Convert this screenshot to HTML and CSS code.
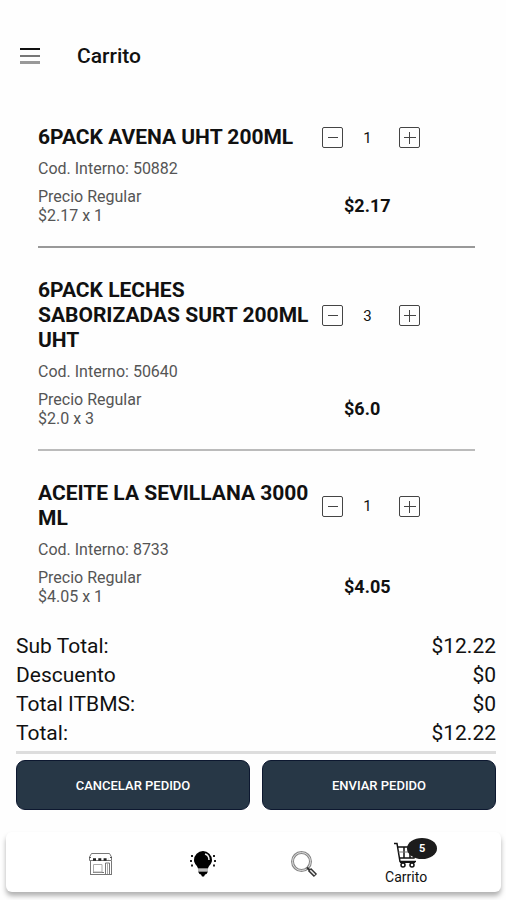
FILE: index.html
```html
<!DOCTYPE html>
<html lang="es">
<head>
<meta charset="utf-8">
<meta name="viewport" content="width=device-width, initial-scale=1">
<title>Carrito</title>
<link rel="stylesheet" href="styles.css">
</head>
<body>
<div class="app">
  <header class="topbar">
    <button class="menu" type="button" aria-label="Menú">
      <svg width="22" height="18" viewBox="0 0 22 18"><path d="M1 2h20" stroke="#111" stroke-width="2"/><path d="M1 9h20" stroke="#777" stroke-width="2"/><path d="M1 15.500h20" stroke="#999" stroke-width="3"/></svg>
    </button>
    <h1 class="title">Carrito</h1>
  </header>

  <main class="items">
    <article class="item">
      <h2 class="name">6PACK AVENA UHT 200ML</h2>
      <div class="stepper">
        <button class="step" type="button" aria-label="Quitar"><svg viewBox="0 0 20 20"><path d="M5 9.500h10"/></svg></button>
        <span class="qty">1</span>
        <button class="step" type="button" aria-label="Agregar"><svg viewBox="0 0 20 20"><path d="M4 9.500h12M9.500 4v12"/></svg></button>
      </div>
      <p class="code">Cod. Interno: 50882</p>
      <p class="unit">Precio Regular<br>$2.17 x 1</p>
      <p class="price">$2.17</p>
    </article>
    <article class="item item-soft">
      <h2 class="name">6PACK LECHES SABORIZADAS SURT 200ML UHT</h2>
      <div class="stepper">
        <button class="step" type="button" aria-label="Quitar"><svg viewBox="0 0 20 20"><path d="M5 9.500h10"/></svg></button>
        <span class="qty">3</span>
        <button class="step" type="button" aria-label="Agregar"><svg viewBox="0 0 20 20"><path d="M4 9.500h12M9.500 4v12"/></svg></button>
      </div>
      <p class="code">Cod. Interno: 50640</p>
      <p class="unit">Precio Regular<br>$2.0 x 3</p>
      <p class="price">$6.0</p>
    </article>
    <article class="item">
      <h2 class="name">ACEITE LA SEVILLANA 3000 ML</h2>
      <div class="stepper">
        <button class="step" type="button" aria-label="Quitar"><svg viewBox="0 0 20 20"><path d="M5 9.500h10"/></svg></button>
        <span class="qty">1</span>
        <button class="step" type="button" aria-label="Agregar"><svg viewBox="0 0 20 20"><path d="M4 9.500h12M9.500 4v12"/></svg></button>
      </div>
      <p class="code">Cod. Interno: 8733</p>
      <p class="unit">Precio Regular<br>$4.05 x 1</p>
      <p class="price">$4.05</p>
    </article>
  </main>

  <section class="summary">
    <dl class="totals">
      <div class="row"><dt>Sub Total:</dt><dd>$12.22</dd></div>
      <div class="row"><dt>Descuento</dt><dd>$0</dd></div>
      <div class="row"><dt>Total ITBMS:</dt><dd>$0</dd></div>
      <div class="row"><dt>Total:</dt><dd>$12.22</dd></div>
    </dl>
    <div class="actions">
      <button class="action" type="button">CANCELAR PEDIDO</button>
      <button class="action" type="button">ENVIAR PEDIDO</button>
    </div>
  </section>

  <nav class="tabs">
    <a class="tab" href="#tienda" aria-label="Tienda">
      <svg width="28" height="24" viewBox="0 0 28 24" fill="none" stroke="#777" stroke-width="1">
        <path d="M4.500 1.500h18l2 3.500v3.500h-22V5z"/>
        <path d="M2 5.500h2M23 5.500h2" stroke="#555"/>
        <path d="M6 7.500h16" stroke="#222" stroke-width="2.500" stroke-dasharray="3 2.300"/>
        <path d="M3.500 9v13.500h21V9"/>
        <path d="M3 22.500h22M6 20.500h11"/>
        <path d="M6.500 12.500h8.500v7.500h-8.500z" stroke="#aaa"/>
        <path d="M18.500 22V11h4v11" stroke="#777"/>
        <path d="M20.500 11v11" stroke="#aaa"/>
      </svg>
    </a>
    <a class="tab" href="#ideas" aria-label="Ideas">
      <svg width="28" height="28" viewBox="0 0 28 28">
        <path d="M14 1a9 9 0 0 0-9 9c0 4 3.500 5.500 4 8.500h10c.5-3 4-4.500 4-8.500a9 9 0 0 0-9-9zM9 21.500h10l-1.500 2.500-1.500.5-1 2h-2l-1-2-1.500-.5z"/>
        <path d="M9 20h10" stroke="#777" stroke-width="1"/>
        <path d="M16 4q4 1 4 6" fill="none" stroke="#eee" stroke-width="1.500"/>
        <path d="M2 6h2M1 11h2M2 15.500h2M24 6h2M25 11h2M24 15.500h2" stroke="#222" stroke-width="2"/>
      </svg>
    </a>
    <a class="tab" href="#buscar" aria-label="Buscar">
      <svg width="28" height="28" viewBox="0 0 28 28" fill="none">
        <circle cx="11.500" cy="11.500" r="9" stroke="#888" stroke-width="3"/>
        <circle cx="11.500" cy="11.500" r="9" stroke="#ddd" stroke-width="1"/>
        <path d="M17 17.500l3 3" stroke="#333" stroke-width="2"/>
        <path d="M19.500 19.500l6 6" stroke="#333" stroke-width="4.500"/>
        <path d="M20.300 20.300l4.500 4.500" stroke="#eee" stroke-width="1.500"/>
      </svg>
    </a>
    <a class="tab" href="#carrito">
      <span class="cart">
        <svg width="26" height="26" viewBox="0 0 26 26" fill="none" stroke="#111" stroke-width="1.500">
          <path d="M1 1.500h3l3 18h16M4.500 5H23l-2 11H6.500M11 5v11M17 5v11"/>
          <path d="M5.500 10h17" stroke="#777" stroke-width="1"/>
          <path d="M7 20h15" stroke-width="2"/>
          <circle cx="10" cy="23" r="2"/><circle cx="19" cy="23" r="2"/>
        </svg>
        <span class="badge">5</span>
      </span>
      <span class="tab-label">Carrito</span>
    </a>
  </nav>
</div>
</body>
</html>
```
FILE: styles.css
```css
* { box-sizing: border-box; margin: 0; }

body {
  background: #fefefe;
  color: #111;
  font-family: Roboto, "Liberation Sans", sans-serif;
}

button {
  padding: 0;
  border: 0;
  background: none;
  font: inherit;
  cursor: pointer;
}

svg { display: block; }

.app {
  display: flex;
  flex-direction: column;
  min-height: 100vh;
}

.topbar {
  display: flex;
  align-items: center;
  gap: 36px;
  padding: 40px 19px 0;
  height: 72px;
}

.title {
  font-size: 21px;
  font-weight: 500;
  line-height: 32px;
}

.items {
  display: flex;
  flex-direction: column;
  gap: 30px;
  padding: 53px 31px 26px 38px;
}

.item {
  display: grid;
  grid-template-columns: 65% 1fr;
  align-items: center;
  row-gap: 9px;
  padding-bottom: 21px;
  border-bottom: 2px solid #999;
}

.item-soft { border-color: #bbb; }

.item:last-child {
  padding-bottom: 0;
  border-bottom: 0;
}

.name {
  font-size: 21px;
  font-weight: 700;
  line-height: 25px;
}

.stepper {
  display: flex;
  align-items: center;
}

.step {
  width: 21px;
  height: 21px;
  border: 1px solid #444;
  border-radius: 2px;
}

.step svg {
  width: 20px;
  height: 20px;
  fill: none;
  stroke: #444;
  stroke-width: 1;
}

.qty {
  width: 56px;
  padding-right: 7px;
  font-size: 15px;
  line-height: 22px;
  text-align: center;
}

.code,
.unit {
  color: #555;
  font-size: 16px;
  line-height: 19px;
}

.code { grid-column: 1 / -1; }

.price {
  padding-left: 22px;
  font-size: 18px;
  font-weight: 700;
  line-height: 22px;
}

.summary { padding: 0 10px 0 16px; }

.totals {
  padding-bottom: 3px;
  border-bottom: 3px solid #ddd;
}

.row {
  display: flex;
  justify-content: space-between;
  font-size: 21px;
  line-height: 29px;
}

.actions {
  display: flex;
  gap: 12px;
  padding-top: 6px;
}

.action {
  flex: 1;
  height: 50px;
  border: 1px solid #0d1830;
  border-radius: 9px;
  background: #273746;
  color: #fff;
  font-size: 13px;
  font-weight: 500;
}

.tabs {
  display: flex;
  justify-content: space-between;
  align-items: center;
  margin: auto 5px 8px 6px;
  padding: 3px 44px 0;
  height: 60px;
  border-radius: 6px;
  background: #fff;
  box-shadow: 0 4px 5px rgba(0, 0, 0, 0.3);
}

.tab {
  display: flex;
  flex: 1;
  flex-direction: column;
  align-items: center;
  color: #111;
  text-decoration: none;
}

.cart { position: relative; }

.badge {
  position: absolute;
  top: -4px;
  left: 14px;
  width: 30px;
  height: 21px;
  border-radius: 50%;
  background: #1c1c1c;
  color: #fff;
  font-size: 11px;
  font-weight: 700;
  line-height: 21px;
  text-align: center;
}

.tab-label {
  font-size: 14px;
  line-height: 18px;
}
```
